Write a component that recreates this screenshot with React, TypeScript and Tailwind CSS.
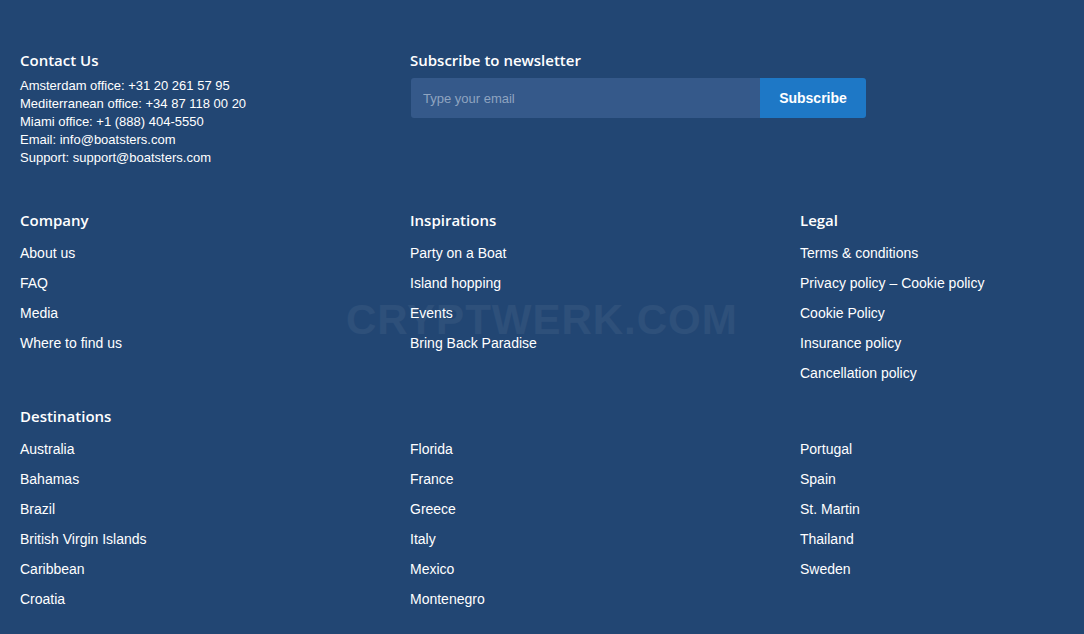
const company = ["About us", "FAQ", "Media", "Where to find us"];
const inspirations = ["Party on a Boat", "Island hopping", "Events", "Bring Back Paradise"];
const legal = [
  "Terms & conditions",
  "Privacy policy – Cookie policy",
  "Cookie Policy",
  "Insurance policy",
  "Cancellation policy",
];
const destinations = [
  ["Australia", "Bahamas", "Brazil", "British Virgin Islands", "Caribbean", "Croatia"],
  ["Florida", "France", "Greece", "Italy", "Mexico", "Montenegro"],
  ["Portugal", "Spain", "St. Martin", "Thailand", "Sweden"],
];

const heading = "font-['Open_Sans',sans-serif] text-[15px] font-semibold leading-5 text-white";
const body = "font-['Liberation_Sans',Arial,sans-serif]";

function LinkList({ items }: { items: string[] }) {
  return (
    <ul className="flex flex-col gap-[10px]">
      {items.map((item) => (
        <li key={item} className={`${body} text-[14px] leading-5 text-white`}>
          <a href="#">{item}</a>
        </li>
      ))}
    </ul>
  );
}

function Column({ title, items }: { title: string; items: string[] }) {
  return (
    <div className="w-[390px] shrink-0">
      <h3 className={`${heading} mb-[13px]`}>{title}</h3>
      <LinkList items={items} />
    </div>
  );
}

export default function App() {
  return (
    <footer className="relative min-h-[634px] w-full overflow-hidden bg-[#224673] pl-5 pt-[50px]">
      <div className="flex">
        <div className="w-[390px] shrink-0">
          <h3 className={`${heading} mb-[7px]`}>Contact Us</h3>
          <div className={`${body} text-[13px] leading-[18px] text-white`}>
            <p>Amsterdam office: +31 20 261 57 95</p>
            <p>Mediterranean office: +34 87 118 00 20</p>
            <p>Miami office: +1 (888) 404-5550</p>
            <p>Email: info@boatsters.com</p>
            <p>Support: support@boatsters.com</p>
          </div>
        </div>
        <div className="w-[456px] shrink-0">
          <h3 className={heading}>Subscribe to newsletter</h3>
          <form className="mt-2 flex h-10 pl-px" onSubmit={(e) => e.preventDefault()}>
            <input
              type="email"
              placeholder="Type your email"
              className={`${body} h-10 w-[349px] rounded-l-[3px] bg-[#35598a] px-3 text-[13px] text-white outline-none placeholder:text-[#8fa4c0]`}
            />
            <button
              type="submit"
              className={`${body} h-10 w-[106px] rounded-r-[3px] bg-[#1e78c6] text-[14px] font-bold text-white`}
            >
              Subscribe
            </button>
          </form>
        </div>
      </div>

      <div className="mt-[43px] flex">
        <Column title="Company" items={company} />
        <Column title="Inspirations" items={inspirations} />
        <Column title="Legal" items={legal} />
      </div>

      <div className="mt-[23px]">
        <h3 className={`${heading} mb-[13px]`}>Destinations</h3>
        <div className="flex">
          {destinations.map((col, i) => (
            <div key={i} className="w-[390px] shrink-0">
              <LinkList items={col} />
            </div>
          ))}
        </div>
      </div>

      <div className={`${body} pointer-events-none absolute left-[346px] top-[299px] text-[42px] font-bold leading-none tracking-[1px] text-white opacity-[0.05]`}>
        CRYPTWERK.COM
      </div>
    </footer>
  );
}
